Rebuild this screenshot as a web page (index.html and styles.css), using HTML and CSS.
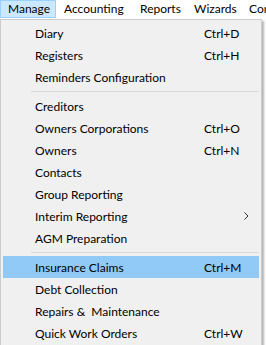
FILE: index.html
```html
<!DOCTYPE html>
<html lang="en">
<head>
    <meta charset="UTF-8">
    <title>Manage Menu</title>
    <link rel="stylesheet" href="styles.css">
</head>
<body>
    <div class="menubar">
        <div class="menubar-item manage active">Manage</div>
        <div class="menubar-item accounting">Accounting</div>
        <div class="menubar-item reports">Reports</div>
        <div class="menubar-item wizards">Wizards</div>
        <div class="menubar-item">Contacts</div>
    </div>

    <div class="menu">
        <div class="menu-item"><span>Diary</span><span class="shortcut">Ctrl+D</span></div>
        <div class="menu-item"><span>Registers</span><span class="shortcut">Ctrl+H</span></div>
        <div class="menu-item"><span>Reminders Configuration</span></div>
        <div class="separator"></div>
        <div class="menu-item"><span>Creditors</span></div>
        <div class="menu-item"><span>Owners Corporations</span><span class="shortcut">Ctrl+O</span></div>
        <div class="menu-item"><span>Owners</span><span class="shortcut">Ctrl+N</span></div>
        <div class="menu-item"><span>Contacts</span></div>
        <div class="menu-item"><span>Group Reporting</span></div>
        <div class="menu-item has-sub">
            <span>Interim Reporting</span>
            <svg class="arrow" width="5" height="8" viewBox="0 0 5 8">
                <path d="M0.5 0.5 L4 4 L0.5 7.5" fill="none" stroke="#333" stroke-width="1"/>
            </svg>
        </div>
        <div class="menu-item"><span>AGM Preparation</span></div>
        <div class="separator"></div>
        <div class="menu-item hover"><span>Insurance Claims</span><span class="shortcut">Ctrl+M</span></div>
        <div class="menu-item"><span>Debt Collection</span></div>
        <div class="menu-item"><span>Repairs &amp;&nbsp; Maintenance</span></div>
        <div class="menu-item"><span>Quick Work Orders</span><span class="shortcut">Ctrl+W</span></div>
    </div>
</body>
</html>
```

FILE: styles.css
```css
body {
    margin: 0;
    font-family: Lato, "Noto Sans", sans-serif;
    font-size: 12px;
    color: #000;
    background-color: #fff;
    overflow: hidden;
}

.menubar {
    display: flex;
    height: 19px;
    white-space: nowrap;
    overflow: hidden;
}

.menubar-item {
    flex-shrink: 0;
    height: 16px;
    line-height: 16px;
    padding: 0 7px;
    border: 1px solid transparent;
}

.menubar-item.manage { width: 40px; }
.menubar-item.accounting { width: 60px; }
.menubar-item.reports { width: 38px; }
.menubar-item.wizards { width: 39px; }

.menubar-item.active {
    background-color: #cce8ff;
    border-color: #99d1ff;
}

.menu {
    width: 256px;
    padding: 2px;
    background-color: #f0f0f0;
    border: 1px solid #cccccc;
    box-shadow: 2px 2px 2px rgba(0,0,0,0.3);
}

.menu-item {
    display: grid;
    grid-template-columns: 169px 1fr;
    align-items: center;
    height: 22px;
    padding-left: 32px;
    white-space: nowrap;
}

.menu-item.hover {
    background-color: #91c9f7;
}

.menu-item.has-sub {
    grid-template-columns: 209px 1fr;
}

.arrow {
    display: block;
}

.separator {
    height: 1px;
    margin: 3px 0 3px 28px;
    background-color: #d7d7d7;
}
```
